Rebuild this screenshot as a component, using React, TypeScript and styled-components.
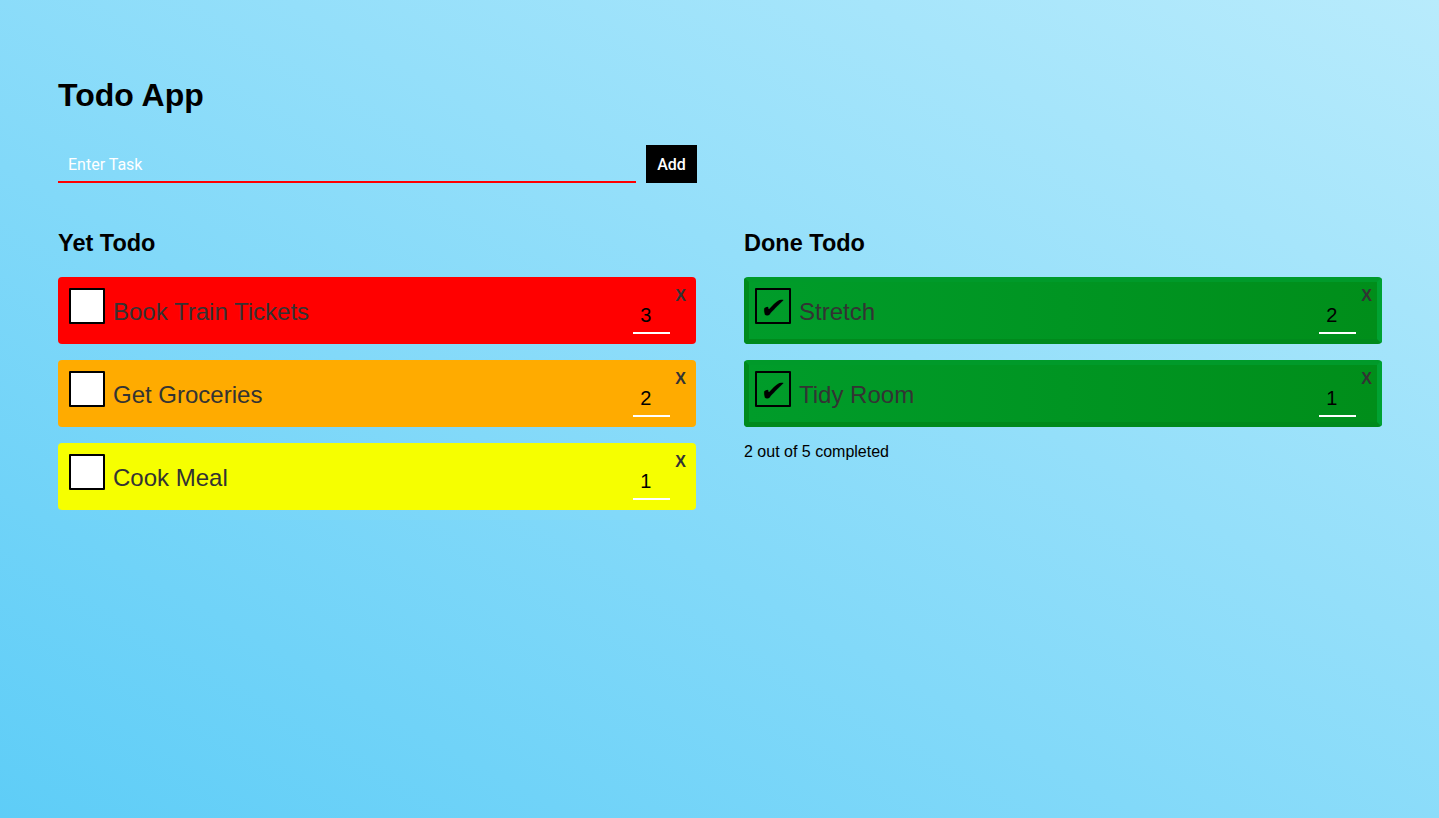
import React from "react";
import styled, { createGlobalStyle } from "styled-components";

const GlobalStyle = createGlobalStyle`
  html, body, #root { margin: 0; padding: 0; min-height: 100%; height: 100%; }
  body { font-family: "Liberation Sans", Arial, sans-serif; }
  * { box-sizing: border-box; }
`;

const Page = styled.div`
  min-height: 100vh;
  padding: 75px 58px 40px;
  background: linear-gradient(to top right, #5ecdf7, #b8ebfc);
  font-family: "Liberation Sans", Arial, sans-serif;
`;

const Title = styled.h1`
  margin: 0;
  font-size: 32px;
  line-height: 40px;
  font-weight: 700;
  color: #000;
`;

const Form = styled.form`
  display: flex;
  gap: 10px;
  margin-top: 30px;
`;

const TaskInput = styled.input`
  width: 578px;
  height: 38px;
  border: none;
  border-bottom: 2px solid #ff0000;
  background: transparent;
  padding: 2px 10px 0;
  color: #fff;
  font-family: Roboto, "Liberation Sans", sans-serif;
  font-size: 16px;
  outline: none;
  &::placeholder { color: #fff; opacity: 1; }
`;

const AddButton = styled.button`
  width: 51px;
  height: 38px;
  border: none;
  background: #000;
  color: #fff;
  font-family: Roboto, "Liberation Sans", sans-serif;
  font-weight: 500;
  font-size: 16px;
  padding: 0;
`;

const Columns = styled.div`
  display: grid;
  grid-template-columns: 638px 638px;
  column-gap: 48px;
  margin-top: 47px;
  align-items: start;
`;

const Column = styled.section``;

const Heading = styled.h2`
  margin: 0 0 21px;
  font-size: 23.5px;
  line-height: 26px;
  font-weight: 700;
  color: #000;
`;

const List = styled.div`
  display: flex;
  flex-direction: column;
  gap: 16px;
`;

const Card = styled.div<{ $bg: string; $done?: boolean }>`
  display: flex;
  height: 67px;
  border-radius: 4px;
  background: ${(p) => p.$bg};
  padding: ${(p) => (p.$done ? "6px 5px 5px 6px" : "11px 10px 10px 11px")};
  ${(p) =>
    p.$done
      ? `border: 5px solid; border-color: #009a2a #00a232 #008a1c #008a1c;
         background: linear-gradient(to right, #009c2a, #008e1a);`
      : ""}
`;

const CheckBox = styled.div<{ $done?: boolean }>`
  width: 36px;
  height: 36px;
  flex: none;
  border: 2px solid #000;
  border-radius: 1px;
  background: ${(p) => (p.$done ? "transparent" : "#fff")};
  display: flex;
  align-items: center;
  justify-content: center;
`;

const Tick = styled.span`
  display: block;
  font-family: "DejaVu Sans", sans-serif;
  font-size: 29px;
  line-height: 32px;
  height: 32px;
  color: #000;
  transform: translateY(2px) skewX(-10deg);
`;

const Label = styled.span`
  flex: 1;
  align-self: center;
  margin-left: 8px;
  padding-top: 2px;
  font-size: 24px;
  line-height: 28px;
  color: #333;
`;

const NumberInput = styled.input`
  align-self: flex-end;
  width: 37px;
  height: 32px;
  border: none;
  border-bottom: 2px solid #fff;
  background: transparent;
  padding: 0 0 3px 7px;
  font-family: "Liberation Sans", Arial, sans-serif;
  font-size: 20px;
  color: #000;
  outline: none;
  -moz-appearance: textfield;
  appearance: textfield;
  &::-webkit-inner-spin-button,
  &::-webkit-outer-spin-button { -webkit-appearance: none; margin: 0; }
`;

const Close = styled.button`
  align-self: flex-start;
  margin: 0 0 0 5px;
  padding: 0;
  border: none;
  background: transparent;
  font-family: "Liberation Sans", Arial, sans-serif;
  font-weight: 700;
  font-size: 16px;
  line-height: 16px;
  color: #333;
`;

const Summary = styled.p`
  margin: 16px 0 0;
  font-size: 16px;
  line-height: 18px;
  color: #000;
`;

type Task = { name: string; n: number; color?: string };

const todo: Task[] = [
  { name: "Book Train Tickets", n: 3, color: "#ff0000" },
  { name: "Get Groceries", n: 2, color: "#ffab00" },
  { name: "Cook Meal", n: 1, color: "#f6ff00" },
];

const done: Task[] = [
  { name: "Stretch", n: 2 },
  { name: "Tidy Room", n: 1 },
];

export default function App() {
  return (
    <>
      <GlobalStyle />
      <Page>
        <Title>Todo App</Title>
        <Form onSubmit={(e) => e.preventDefault()}>
          <TaskInput placeholder="Enter Task" />
          <AddButton type="submit">Add</AddButton>
        </Form>
        <Columns>
          <Column>
            <Heading>Yet Todo</Heading>
            <List>
              {todo.map((t) => (
                <Card key={t.name} $bg={t.color!}>
                  <CheckBox />
                  <Label>{t.name}</Label>
                  <NumberInput type="number" defaultValue={t.n} />
                  <Close>X</Close>
                </Card>
              ))}
            </List>
          </Column>
          <Column>
            <Heading>Done Todo</Heading>
            <List>
              {done.map((t) => (
                <Card key={t.name} $bg="#009522" $done>
                  <CheckBox $done>
                    <Tick>✔</Tick>
                  </CheckBox>
                  <Label>{t.name}</Label>
                  <NumberInput type="number" defaultValue={t.n} />
                  <Close>X</Close>
                </Card>
              ))}
            </List>
            <Summary>2 out of 5 completed</Summary>
          </Column>
        </Columns>
      </Page>
    </>
  );
}
